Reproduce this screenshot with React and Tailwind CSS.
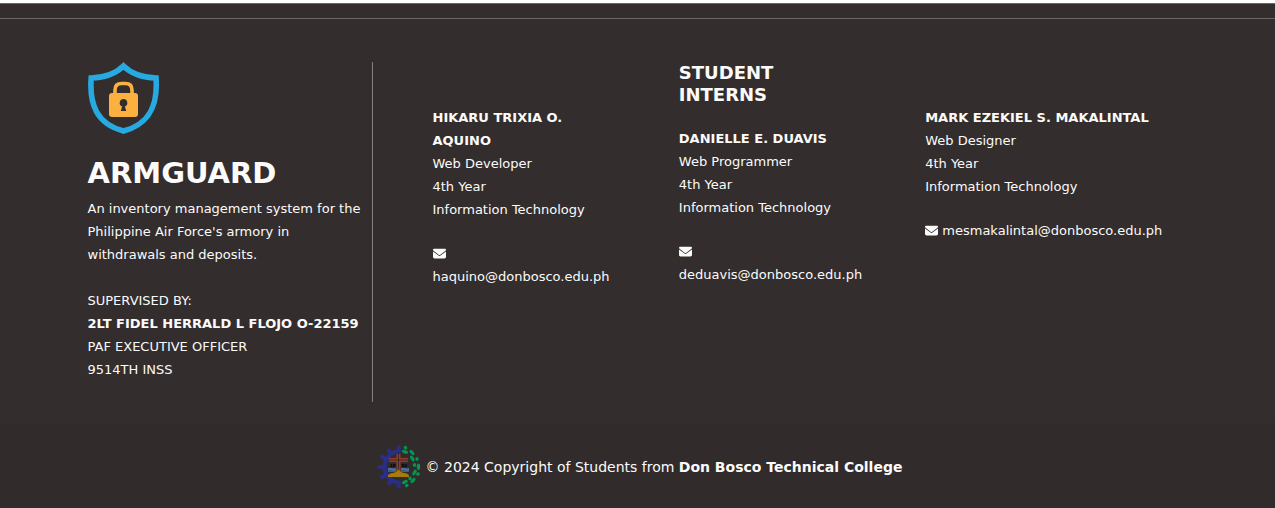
import React from "react";

const interns = [
  {
    name: "HIKARU TRIXIA O. AQUINO",
    role: "Web Developer",
    email: "haquino@donbosco.edu.ph",
    layout: "pt-11 pr-16",
  },
  {
    heading: "STUDENT INTERNS",
    name: "DANIELLE E. DUAVIS",
    role: "Web Programmer",
    email: "deduavis@donbosco.edu.ph",
    layout: "pr-16",
  },
  {
    name: "MARK EZEKIEL S. MAKALINTAL",
    role: "Web Designer",
    email: "mesmakalintal@donbosco.edu.ph",
    layout: "pt-11",
  },
];

function ShieldLogo() {
  return (
    <svg viewBox="0 0 72 72" className="block size-18" role="img" aria-label="Armguard">
      <path
        d="M35.500 4C29.500 10 18 15.500 3.200 16C1.200 43 9 62 35.500 69C62 62 70 43 68 16C53 15.500 41.500 10 35.500 4Z"
        fill="none"
        stroke="#27aae1"
        strokeWidth="5.600"
      />
      <path d="M27 33V28Q27 21.500 33.500 21.500H37.500Q44 21.500 44 28V33" fill="none" stroke="#fbb040" strokeWidth="3.600" />
      <rect x="21" y="31" width="29" height="24" rx="3" fill="#fbb040" />
      <path d="M35.500 37A3.900 3.900 0 0 0 34.100 44.500L32.800 49H38.200L36.900 44.500A3.900 3.900 0 0 0 35.500 37Z" fill="#332d2d" />
    </svg>
  );
}

function Envelope() {
  return (
    <svg viewBox="0 0 512 512" className="inline-block size-[13px] align-[-2px]" aria-hidden="true">
      <path
        fill="currentColor"
        d="M48 64C21.500 64 0 85.500 0 112c0 15.100 7.100 29.300 19.200 38.400L236.800 313.600c11.400 8.500 27 8.500 38.400 0L492.800 150.400c12.100-9.100 19.200-23.300 19.200-38.400c0-26.500-21.500-48-48-48H48zM0 176V384c0 35.300 28.700 64 64 64H448c35.300 0 64-28.700 64-64V176L294.400 339.200c-22.800 17.100-54 17.100-76.800 0L0 176z"
      />
    </svg>
  );
}

const leaves = [
  [28.500, 2.700, 60], [28, 6.800, 20], [35, 7.500, 50], [35.300, 13.500, 60], [40, 14, 80],
  [37.500, 20, 70], [41.500, 21.800, 90], [37.500, 27.500, 120], [41, 29, 150],
  [33, 33.500, 70], [36, 35.500, 130], [27.800, 37, 155], [29.800, 40.500, 150],
];
const smallLeaves = [0, 4, 5, 8, 9, 12];

function CollegeSeal() {
  return (
    <svg viewBox="0 0 44 44" className="block size-11 shrink-0" role="img" aria-label="Don Bosco Technical College">
      <path d="M23.500 6A16 16 0 0 0 23.500 38" fill="none" stroke="#292e86" strokeWidth="4.200" />
      <g stroke="#292e86" strokeWidth="4" strokeLinecap="round">
        <path d="M21.800 2.500V6M12 5.500L14 9M5 12L9 14M2 22H6M5 32L9 30M12 38.500L14 35M21.800 41.500V38" />
      </g>
      <path d="M12 15H31M21.500 9V27" stroke="#963a2a" strokeWidth="4" />
      <path d="M12 15H31M21.500 9V25" stroke="#2b2424" strokeWidth="0.800" />
      <text x="13" y="21.500" className="fill-black font-['DejaVu_Sans'] text-[4px] font-bold">19</text>
      <text x="24.500" y="21.500" className="fill-black font-['DejaVu_Sans'] text-[4px] font-bold">53</text>
      <path d="M11 23H19V27H11ZM24 23H32V27H24Z" fill="#3d5c8c" />
      <path d="M11 24.500Q13 22.500 15 24.500T19 24M24 24.500Q26 22.500 28 24.500T32 24" fill="none" stroke="#617da6" />
      <path d="M11 32V30.500Q12 28 16 28Q20 27 21.500 24.500Q23 27 27 28Q31 28 32 30.500V32Z" fill="#a77b08" />
      {leaves.map(([x, y, angle], i) => (
        <ellipse
          key={i}
          cx={x}
          cy={y}
          rx={smallLeaves.includes(i) ? 1.900 : 3.200}
          ry={1.700}
          fill="#079452"
          transform={`rotate(${angle} ${x} ${y})`}
        />
      ))}
    </svg>
  );
}

function Intern({ heading, name, role, email, layout }) {
  return (
    <section className={layout}>
      {heading && <h2 className="mb-[21px] text-[18px] leading-[22px] font-bold">{heading}</h2>}
      <p className="font-bold">{name}</p>
      <p>{role}</p>
      <p>4th Year</p>
      <p>Information Technology</p>
      <p className="mt-[21px]">
        <Envelope /> <a href={`mailto:${email}`}>{email}</a>
      </p>
    </section>
  );
}

export default function App() {
  return (
    <footer className="mt-[3px] border-t border-[#6b6767] bg-[#332d2d] font-['DejaVu_Sans',sans-serif] text-[13px] leading-[23px] text-[#fbfbfb]">
      <div className="border-b border-[#6b6767] pt-3.5" />
      <div className="mx-auto flex max-w-[1100px] pt-[43px] pb-[21px]">
        <section className="w-[285px] shrink-0 border-r border-[#858181] pb-[21px]">
          <ShieldLogo />
          <h1 className="mt-[21px] mb-[5px] text-[29px] leading-[37px] font-bold">ARMGUARD</h1>
          <p className="pr-2">An inventory management system for the Philippine Air Force's armory in withdrawals and deposits.</p>
          <div className="mt-[23px]">
            <p>SUPERVISED BY:</p>
            <p className="font-bold">2LT FIDEL HERRALD L FLOJO O-22159</p>
            <p>PAF EXECUTIVE OFFICER</p>
            <p>9514TH INSS</p>
          </div>
        </section>
        <div className="grid grow grid-cols-3 pr-4 pl-15">
          {interns.map((intern) => (
            <Intern key={intern.email} {...intern} />
          ))}
        </div>
      </div>
      <div className="flex items-center justify-center gap-[5px] bg-[#312b2b] pt-[22px] pr-4 pb-5 pl-5 text-[14px]">
        <CollegeSeal />
        <p>
          © 2024 Copyright of Students from <a href="#college" className="font-bold">Don Bosco Technical College</a>
        </p>
      </div>
    </footer>
  );
}
